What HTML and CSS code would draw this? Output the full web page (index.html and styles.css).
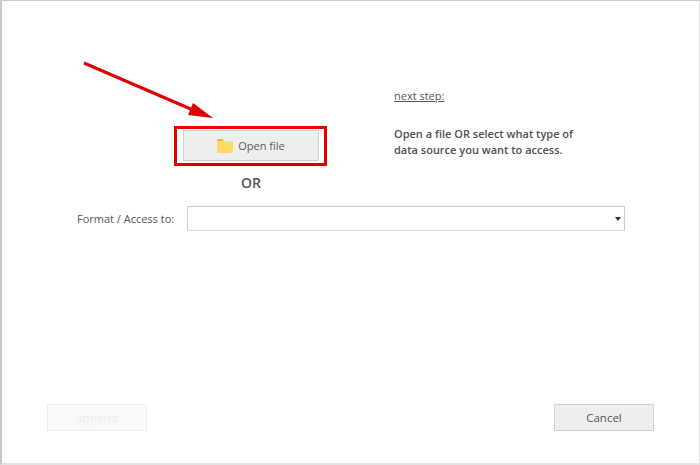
FILE: index.html
```html
<!DOCTYPE html>
<html lang="en">
<head>
<meta charset="utf-8">
<title>Open file</title>
<link rel="stylesheet" href="styles.css">
</head>
<body>
<main class="window">
  <section class="top">
    <div class="open-col">
      <button class="btn open-btn" type="button">
        <svg class="folder" width="16" height="14" viewBox="0 0 16 14" aria-hidden="true">
          <path d="M0 1a1 1 0 0 1 1-1h4.500l2 2.500H0z" fill="#e8b93f"/>
          <path d="M0 2.500h15a1 1 0 0 1 1 1V13a1 1 0 0 1-1 1H1a1 1 0 0 1-1-1z" fill="#ffd966"/>
        </svg>
        <span>Open file</span>
      </button>
      <div class="or">OR</div>
    </div>
    <div class="hint">
      <div class="next">next step:</div>
      <p class="hint-text">Open a file OR select what type of<br>data source you want to access.</p>
    </div>
  </section>
  <section class="format-row">
    <label class="format-label">Format / Access to:</label>
    <div class="select"><span class="caret"></span></div>
  </section>
  <footer class="actions">
    <button class="btn append" type="button" disabled>append</button>
    <button class="btn" type="button">Cancel</button>
  </footer>
  <div class="highlight"></div>
  <svg class="arrow" width="150" height="70" viewBox="0 0 150 70" aria-hidden="true">
    <line x1="1" y1="2" x2="110" y2="49" stroke="#e00000" stroke-width="3"/>
    <path d="M130 57 L105 54 L110 42 Z" fill="#e00000"/>
  </svg>
</main>
</body>
</html>
```
FILE: styles.css
```css
* { box-sizing: border-box; }
html, body { margin: 0; padding: 0; background: #fff; }
body {
  width: 700px;
  height: 465px;
  overflow: hidden;
  font-family: "Open Sans", "Noto Sans", sans-serif;
  color: #4a4a4a;
}
.window {
  position: relative;
  width: 700px;
  height: 465px;
  display: flex;
  flex-direction: column;
  background: #fff;
  border-style: solid;
  border-color: #e2e2e2;
  border-width: 1px 1px 2px 2px;
  border-left-color: #c8c8c8;
  border-top-color: #cccccc;
}
.top {
  display: flex;
  padding: 88px 0 0 181px;
}
.open-col {
  width: 136px;
  margin-right: 75px;
  display: flex;
  flex-direction: column;
  align-items: center;
  padding-top: 41px;
}
.btn {
  width: 100px;
  height: 27px;
  padding: 0;
  font: inherit;
  font-size: 11.500px;
  color: #555;
  background: #eeeeee;
  border: 1px solid #cfcfcf;
}
.open-btn {
  width: 136px;
  height: 31px;
  display: flex;
  align-items: center;
  justify-content: center;
  gap: 5px;
  font-size: 11px;
  color: #5a5a5a;
}
.folder { flex: none; }
.or {
  margin-top: 12px;
  font-size: 14px;
  font-weight: 600;
  line-height: 20px;
  color: #555;
}
.hint { width: 240px; }
.next {
  font-size: 11px;
  line-height: 14px;
  text-decoration: underline;
  color: #555;
}
.hint-text {
  margin: 23px 0 0;
  font-size: 11px;
  font-weight: 600;
  line-height: 16px;
  color: #505050;
}
.format-row {
  display: flex;
  align-items: center;
  margin-top: 13px;
  padding-left: 75px;
}
.format-label {
  width: 110px;
  font-size: 11px;
  color: #555;
}
.select {
  width: 438px;
  height: 25px;
  display: flex;
  align-items: center;
  justify-content: flex-end;
  padding-right: 3px;
  background: #fff;
  border: 1px solid #cdcdcd;
  border-bottom-color: #dcdcdc;
}
.caret {
  width: 0;
  height: 0;
  border-left: 3.500px solid transparent;
  border-right: 3.500px solid transparent;
  border-top: 4px solid #333;
}
.actions {
  display: flex;
  justify-content: space-between;
  margin-top: auto;
  padding: 0 45px 32px 45px;
}
.append {
  background: #f9f9f9;
  border-color: #eeeeee;
  color: #eeeeee;
  font-weight: 600;
}
.highlight {
  position: absolute;
  left: 172px;
  top: 125px;
  width: 153px;
  height: 40px;
  border: 3px solid #e00000;
}
.arrow {
  position: absolute;
  left: 81px;
  top: 60px;
}
```
